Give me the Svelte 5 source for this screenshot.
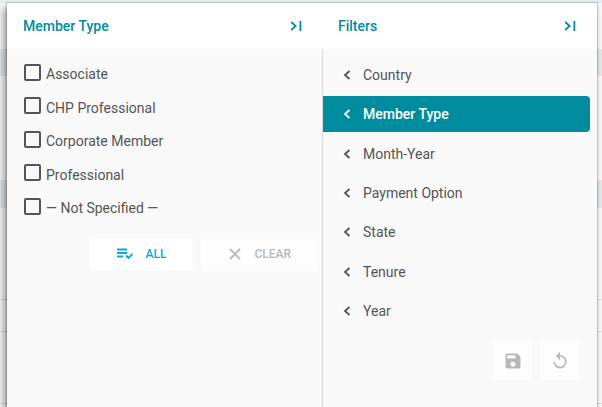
<script lang="ts">
	let members = $state([
		{ name: 'Associate', checked: false },
		{ name: 'CHP Professional', checked: false },
		{ name: 'Corporate Member', checked: false },
		{ name: 'Professional', checked: false },
		{ name: '— Not Specified —', checked: false }
	]);

	const filters = ['Country', 'Member Type', 'Month-Year', 'Payment Option', 'State', 'Tenure', 'Year'];
	let active = $state('Member Type');

	let noneChecked = $derived(members.every((m) => !m.checked));

	function setAll(value: boolean) {
		members.forEach((m) => (m.checked = value));
	}
</script>

{#snippet collapseIcon()}
	<svg width="12" height="12" viewBox="0 0 12 12" aria-hidden="true">
		<path d="M1.2 2 5.6 6 1.2 10M10.4 1v10" fill="none" stroke="currentColor" stroke-width="1.8" />
	</svg>
{/snippet}

<div class="page">
	<div class="drawer">
		<!-- Values of the selected filter -->
		<section class="panel values">
			<header>
				<h2>Member Type</h2>
				<button class="collapse" aria-label="Collapse member type">{@render collapseIcon()}</button>
			</header>
			<div class="body">
				<div class="options">
					{#each members as member}
						<label class="option">
							<input type="checkbox" bind:checked={member.checked} />
							<span>{member.name}</span>
						</label>
					{/each}
				</div>
				<div class="actions">
					<button class="action all" onclick={() => setAll(true)}>
						<svg width="16" height="12" viewBox="0 0 16 12" aria-hidden="true">
							<path d="M0 1.5h10M0 5h10M0 8.5h6" fill="none" stroke="currentColor" stroke-width="1.8" />
							<path d="m9 7.5 2.5 2.5 4-4" fill="none" stroke="currentColor" stroke-width="1.8" />
						</svg>
						ALL
					</button>
					<button class="action clear" disabled={noneChecked} onclick={() => setAll(false)}>
						<svg width="14" height="14" viewBox="0 0 14 14" aria-hidden="true">
							<path d="m2 2 10 10M12 2 2 12" fill="none" stroke="currentColor" stroke-width="1.8" />
						</svg>
						CLEAR
					</button>
				</div>
			</div>
		</section>

		<!-- List of filters -->
		<section class="panel filters">
			<header>
				<h2>Filters</h2>
				<button class="collapse" aria-label="Collapse filters">{@render collapseIcon()}</button>
			</header>
			<div class="body">
				<nav>
					{#each filters as filter}
						<button class="filter" class:active={filter === active} onclick={() => (active = filter)}>
							<svg width="8" height="10" viewBox="0 0 8 10" aria-hidden="true">
								<path d="M6.5 1 2 5l4.5 4" fill="none" stroke="currentColor" stroke-width="1.8" />
							</svg>
							{filter}
						</button>
					{/each}
				</nav>
				<div class="tools">
					<button class="tool" aria-label="Save filters" disabled>
						<svg width="20" height="20" viewBox="0 0 24 24" aria-hidden="true">
							<path
								fill="currentColor"
								d="M17 3H5a2 2 0 0 0-2 2v14a2 2 0 0 0 2 2h14a2 2 0 0 0 2-2V7l-4-4zm-5 16a3 3 0 1 1 0-6 3 3 0 0 1 0 6zm3-10H5V5h10v4z"
							/>
						</svg>
					</button>
					<button class="tool" aria-label="Reset filters" disabled>
						<svg width="20" height="20" viewBox="0 0 24 24" aria-hidden="true">
							<path
								fill="currentColor"
								d="M12 5V1L7 6l5 5V7a6 6 0 1 1-6 6H4a8 8 0 1 0 8-8z"
							/>
						</svg>
					</button>
				</div>
			</div>
		</section>
	</div>
</div>

<style>
	:global(body) {
		margin: 0;
	}

	.page {
		box-sizing: border-box;
		min-height: 100vh;
		padding: 3px 5px 0 7px;
		overflow: hidden;
		display: flex;
		font-family: Roboto, 'Liberation Sans', sans-serif;
		font-size: 14px;
		color: #555;
		/* rows of the table that lies behind the drawer */
		background: linear-gradient(
			#e8edf1 3px,
			#f6f6f6 3px 49px,
			#dfe6ea 49px 76px,
			#f6f6f6 76px 180px,
			#dfe6ea 180px 208px,
			#f6f6f6 208px 299px,
			#dedede 299px 300px,
			#f6f6f6 300px 331px,
			#dedede 331px 332px,
			#f6f6f6 332px 403px,
			#dedede 403px 404px,
			#f6f6f6 404px
		);
	}

	.drawer {
		flex: 1;
		display: grid;
		grid-template-columns: 316fr 274fr;
		background: #f9f9f9;
		box-shadow: 0 0 1px 1px rgba(0, 0, 0, 0.16), -3px 5px 7px rgba(0, 0, 0, 0.4);
	}

	.panel {
		display: flex;
		flex-direction: column;
	}

	header {
		display: flex;
		align-items: center;
		justify-content: space-between;
		height: 46px;
		padding: 0 21px 0 16px;
		background: #fff;
		color: #008c9e;
	}

	.filters header {
		padding-left: 15px;
	}

	h2 {
		margin: 0;
		font-size: 14px;
		font-weight: 500;
	}

	button {
		border: none;
		font: inherit;
		cursor: pointer;
	}

	button:disabled {
		cursor: default;
	}

	svg {
		display: block;
		flex: none;
	}

	.collapse {
		padding: 0;
		background: none;
		color: inherit;
	}

	.body {
		flex: 1;
	}

	.values .body {
		padding: 15px 4px 0 17px;
		border-right: 1px solid #d8d8d8;
	}

	.options {
		display: flex;
		flex-direction: column;
		justify-content: space-between;
		min-height: 154px;
	}

	.option {
		display: flex;
		align-items: center;
		gap: 5px;
		height: 20px;
		cursor: pointer;
	}

	.option input {
		appearance: none;
		box-sizing: border-box;
		width: 17px;
		height: 17px;
		margin: 0 0 4px;
		border: 2px solid #555;
		border-radius: 2px;
	}

	.option input:checked {
		background: #008c9e;
		border-color: #008c9e;
	}

	.option span {
		line-height: 20px;
	}

	.actions {
		display: flex;
		justify-content: flex-end;
		gap: 8px;
		margin-top: 20px;
	}

	.action {
		display: flex;
		align-items: center;
		gap: 12px;
		height: 32px;
		padding: 0 27px;
		border-radius: 2px;
		background: #fff;
		font-size: 12px;
		font-weight: 500;
	}

	.all {
		color: #03a9e0;
	}

	.clear:disabled,
	.tool:disabled {
		background: #fdfdfd;
		color: #b8b8b8;
	}

	.filters .body {
		padding: 8px 7px 0 0;
	}

	nav {
		display: flex;
		flex-direction: column;
		justify-content: space-between;
		min-height: 272px;
	}

	.filter {
		display: flex;
		align-items: center;
		gap: 12px;
		height: 36px;
		padding: 0 20px;
		border-radius: 0 4px 4px 0;
		background: none;
		color: #555;
		text-align: left;
	}

	.filter.active {
		background: #008c9e;
		color: #fff;
		font-weight: 500;
	}

	.tools {
		display: flex;
		justify-content: flex-end;
		gap: 8px;
		margin: 12px 11px 0 0;
	}

	.tool {
		display: grid;
		place-items: center;
		width: 39px;
		height: 39px;
		padding: 0;
		border-radius: 2px;
	}
</style>
